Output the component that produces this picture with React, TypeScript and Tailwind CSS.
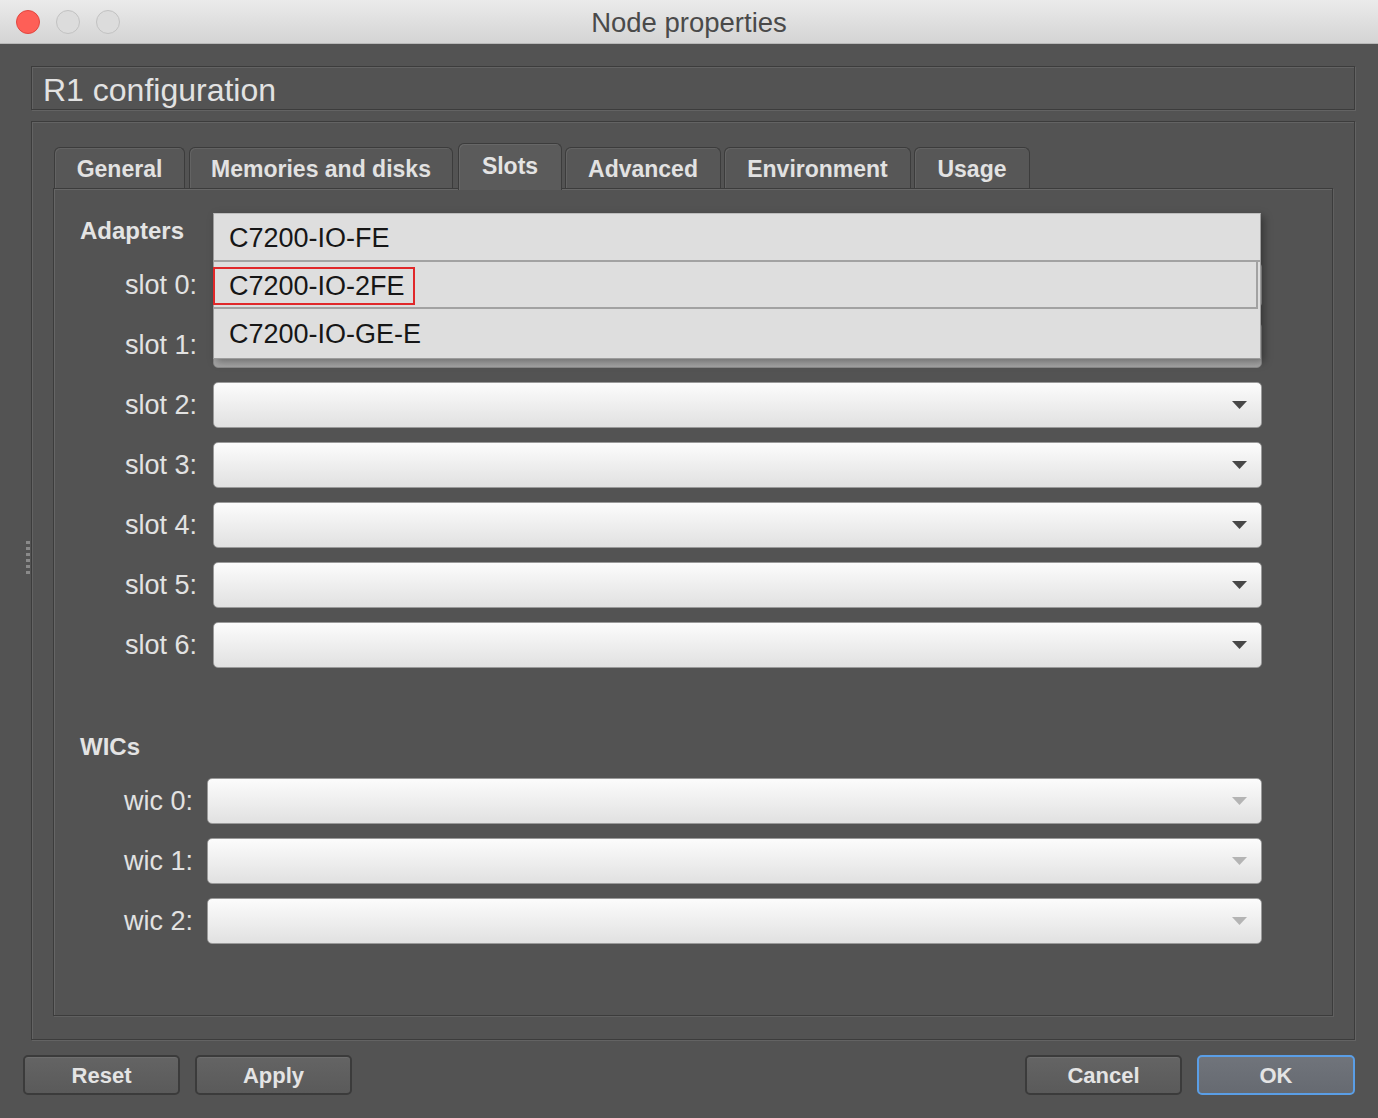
import React from 'react';

const tabs = [
  { label: 'General', w: 'w-[131px]', ml: 'ml-0' },
  { label: 'Memories and disks', w: 'w-[264px]', ml: 'ml-[4px]' },
  { label: 'Slots', w: 'w-[104px]', ml: 'ml-[5px]', active: true },
  { label: 'Advanced', w: 'w-[156px]', ml: 'ml-[3px]' },
  { label: 'Environment', w: 'w-[187px]', ml: 'ml-[3px]' },
  { label: 'Usage', w: 'w-[116px]', ml: 'ml-[3px]' },
];

const adapterItems = ['C7200-IO-FE', 'C7200-IO-2FE', 'C7200-IO-GE-E'];

function Arrow({ light }: { light?: boolean }) {
  return (
    <svg width="15" height="8" viewBox="0 0 15 8">
      <path d="M0 0 L15 0 L7.5 8 Z" fill={light ? '#b4b4b4' : '#474747'} />
    </svg>
  );
}

function Combo({ light, pressed }: { light?: boolean; pressed?: boolean }) {
  return (
    <div
      className={
        pressed
          ? 'flex-1 h-[46px] rounded-[5px] border border-[#8a8a8a] bg-linear-to-b from-[#bcbcbc] to-[#a4a4a4] flex items-center justify-end pr-[14px]'
          : 'flex-1 h-[46px] rounded-[5px] border border-[#9a9a9a] bg-linear-to-b from-[#fcfcfc] to-[#e1e1e1] flex items-center justify-end pr-[14px]'
      }
    >
      <Arrow light={light} />
    </div>
  );
}

function Row({ label, wic, pressed }: { label: string; wic?: boolean; pressed?: boolean }) {
  return (
    <div className="flex items-center">
      <div
        className={
          wic
            ? 'w-[153px] pr-[14px] text-right text-[27px] text-[#e2e2e2]'
            : 'w-[159px] pr-[16px] text-right text-[27px] text-[#e2e2e2]'
        }
      >
        {label}
      </div>
      <Combo light={wic} pressed={pressed} />
    </div>
  );
}

function Button({ label, primary, className }: { label: string; primary?: boolean; className: string }) {
  return (
    <div
      className={
        (primary
          ? 'border-2 border-[#5a9ee6] bg-linear-to-b from-[#70747b] to-[#666a71] '
          : 'border-2 border-[#3b3b3b] bg-linear-to-b from-[#646464] to-[#5a5a5a] shadow-[inset_0_1px_0_#6e6e6e] ') +
        'h-[40px] rounded-[5px] flex items-center justify-center text-[22px] font-bold text-[#e4e4e4] ' +
        className
      }
    >
      {label}
    </div>
  );
}

export default function App() {
  return (
    <div className="relative w-[1378px] h-[1118px] bg-[#535353] flex flex-col overflow-hidden font-['Liberation_Sans',Arial,sans-serif]">
      {/* title bar */}
      <div className="h-[44px] shrink-0 grid grid-cols-[1fr_auto_1fr] items-center bg-linear-to-b from-[#ebebeb] to-[#d4d4d4] border-b border-[#b8b8b8]">
        <div className="flex items-center gap-[16px] pl-[16px]">
          <div className="w-[24px] h-[24px] rounded-full bg-[#fe5f57] border border-[#e2463f]" />
          <div className="w-[24px] h-[24px] rounded-full bg-[#dcdcdc] border border-[#c2c2c2]" />
          <div className="w-[24px] h-[24px] rounded-full bg-[#dcdcdc] border border-[#c2c2c2]" />
        </div>
        <div className="text-[27.5px] text-[#4a4a4a] leading-none pt-[2px]">Node properties</div>
        <div />
      </div>

      {/* resize grip */}
      <div className="absolute left-[26px] top-[541px] flex flex-col gap-[3px]">
        {[0, 1, 2, 3, 4, 5].map((i) => (
          <div key={i} className="w-[4px] h-[3px] bg-[#8a8a8a]" />
        ))}
      </div>

      {/* header box */}
      <div className="ml-[31px] mt-[22px] w-[1324px] h-[44px] shrink-0 border border-[#3c3c3c] shadow-[1px_1px_0_#636363,inset_1px_1px_0_#636363] flex items-center pl-[11px] pt-[3px] text-[32px] text-[#e2e2e2] leading-none">
        R1 configuration
      </div>

      {/* tab frame */}
      <div className="ml-[31px] mt-[11px] w-[1324px] h-[919px] shrink-0 border border-[#3c3c3c] shadow-[1px_1px_0_#636363,inset_1px_1px_0_#636363] pt-[21px] pl-[21px] pr-[21px] flex flex-col">
        <div className="h-[45px] flex items-end pl-[1px]">
          {tabs.map((t) =>
            t.active ? (
              <div
                key={t.label}
                className={`${t.w} ${t.ml} h-[47px] -mb-[2px] relative z-10 rounded-t-[6px] border border-b-0 border-[#3c3c3c] bg-[#5b5b5b] shadow-[inset_1px_1px_0_#676767] flex items-center justify-center pb-[2px] text-[23px] font-bold text-[#e4e4e4]`}
              >
                {t.label}
              </div>
            ) : (
              <div
                key={t.label}
                className={`${t.w} ${t.ml} h-[41px] rounded-t-[6px] border border-b-0 border-[#3c3c3c] bg-[#575757] shadow-[inset_1px_1px_0_#636363] flex items-center justify-center pt-[3px] text-[23px] font-bold text-[#e2e2e2]`}
              >
                {t.label}
              </div>
            )
          )}
        </div>

        {/* tab page */}
        <div className="relative w-[1280px] h-[828px] border border-[#3c3c3c] shadow-[inset_1px_1px_0_#666666,1px_1px_0_#606060] pt-[19px] pr-[70px] flex flex-col">
          <div className="h-[46px] flex items-center pl-[26px] text-[24px] font-bold text-[#e4e4e4]">Adapters</div>
          <div className="mt-[8px] flex flex-col gap-[14px]">
            {[0, 1, 2, 3, 4, 5, 6].map((n) => (
              <Row key={n} label={`slot ${n}:`} pressed={n === 1} />
            ))}
          </div>

          <div className="mt-[56px] h-[46px] flex items-center pl-[26px] text-[24px] font-bold text-[#e4e4e4]">WICs</div>
          <div className="mt-[8px] flex flex-col gap-[14px]">
            {[0, 1, 2].map((n) => (
              <Row key={n} label={`wic ${n}:`} wic />
            ))}
          </div>

          {/* open dropdown list */}
          <div className="absolute left-[159px] top-[24px] w-[1048px] h-[146px] bg-[#dedede] border border-[#9c9c9c] border-t-[#bdbdbd] shadow-[3px_3px_8px_rgba(0,0,0,0.35)] flex flex-col text-[27px] text-[#161616]">
            <div className="h-[48px] flex items-center pl-[15px] pt-[2px] border-b-2 border-[#a2a2a2]">{adapterItems[0]}</div>
            <div className="relative h-[47px] flex items-center pl-[15px] pt-[3px] border-b-2 border-r-2 border-[#a2a2a2] mr-[2px]">
              {adapterItems[1]}
              <div className="absolute left-[-1px] top-[5px] w-[202px] h-[38px] border-2 border-[#e0282a]" />
            </div>
            <div className="flex-1 flex items-center pl-[15px] pt-[2px]">{adapterItems[2]}</div>
          </div>
        </div>
      </div>

      {/* buttons */}
      <div className="mt-[15px] flex items-center pl-[23px] pr-[23px]">
        <Button label="Reset" className="w-[157px]" />
        <Button label="Apply" className="w-[157px] ml-[15px]" />
        <div className="flex-1" />
        <Button label="Cancel" className="w-[157px]" />
        <Button label="OK" primary className="w-[158px] ml-[15px]" />
      </div>
    </div>
  );
}
